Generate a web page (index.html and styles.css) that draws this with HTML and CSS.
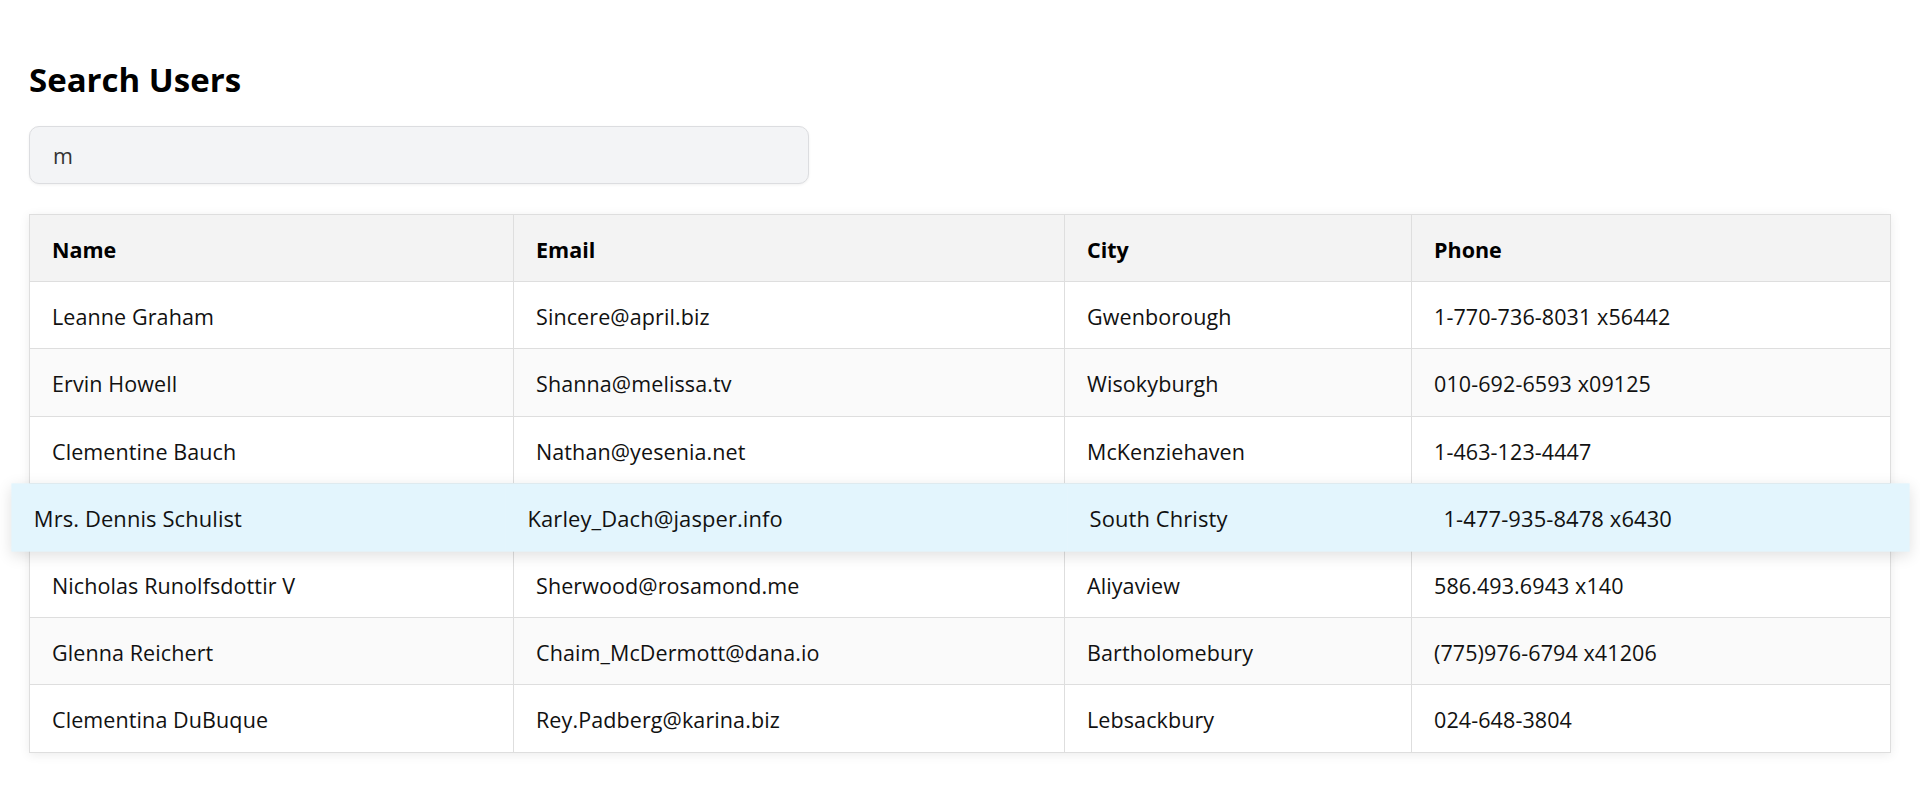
FILE: index.html
```html
<!DOCTYPE html>
<html lang="en">
<head>
<meta charset="utf-8">
<title>Search Users</title>
<link rel="stylesheet" href="styles.css">
</head>
<body>
<main class="page">
  <h1 class="title">Search Users</h1>
  <input class="search" type="text" value="m" aria-label="Search users">
  <table class="users">
    <thead>
      <tr>
        <th class="col-name">Name</th>
        <th class="col-email">Email</th>
        <th class="col-city">City</th>
        <th class="col-phone">Phone</th>
      </tr>
    </thead>
    <tbody>
      <tr><td>Leanne Graham</td><td>Sincere@april.biz</td><td>Gwenborough</td><td>1-770-736-8031 x56442</td></tr>
      <tr><td>Ervin Howell</td><td>Shanna@melissa.tv</td><td>Wisokyburgh</td><td>010-692-6593 x09125</td></tr>
      <tr><td>Clementine Bauch</td><td>Nathan@yesenia.net</td><td>McKenziehaven</td><td>1-463-123-4447</td></tr>
      <tr class="is-hover"><td>Mrs. Dennis Schulist</td><td>Karley_Dach@jasper.info</td><td>South Christy</td><td>1-477-935-8478 x6430</td></tr>
      <tr><td>Nicholas Runolfsdottir V</td><td>Sherwood@rosamond.me</td><td>Aliyaview</td><td>586.493.6943 x140</td></tr>
      <tr><td>Glenna Reichert</td><td>Chaim_McDermott@dana.io</td><td>Bartholomebury</td><td>(775)976-6794 x41206</td></tr>
      <tr><td>Clementina DuBuque</td><td>Rey.Padberg@karina.biz</td><td>Lebsackbury</td><td>024-648-3804</td></tr>
    </tbody>
  </table>
</main>
</body>
</html>
```
FILE: styles.css
```css
* { box-sizing: border-box; }

html, body {
  margin: 0;
  padding: 0;
  background: #ffffff;
}

body {
  font-family: "Open Sans", "Noto Sans", sans-serif;
  color: #111111;
}

.page {
  padding: 59px 29px 40px;
  display: flex;
  flex-direction: column;
  align-items: flex-start;
}

.title {
  margin: 0 0 25px;
  font-size: 33px;
  line-height: 42px;
  font-weight: 700;
  color: #000000;
}

.search {
  width: 780px;
  height: 58px;
  padding: 0 23px;
  border: 1px solid #dcdde0;
  border-radius: 10px;
  background: #f3f4f6;
  font-family: inherit;
  font-size: 21.5px;
  color: #333333;
  box-shadow: 0 1px 3px rgba(0, 0, 0, 0.06);
  outline: none;
  margin: 0 0 30px;
}

.users {
  width: 100%;
  table-layout: fixed;
  border-collapse: separate;
  border-spacing: 0;
  border: 1px solid #dedede;
  border-right: 0;
  border-bottom: 0;
  background: #ffffff;
  box-shadow: 0 2px 10px rgba(0, 0, 0, 0.08);
  font-size: 21.5px;
}

.col-name { width: 484px; }
.col-email { width: 551px; }
.col-city { width: 347px; }

.users th,
.users td {
  padding: 21px 22px 18.2px;
  line-height: 27px;
  text-align: left;
  border-right: 1px solid #dedede;
  border-bottom: 1px solid #dedede;
  white-space: nowrap;
}

.users th {
  background: #f3f3f3;
  font-weight: 700;
  color: #000000;
}

.users td {
  font-weight: 400;
  letter-spacing: 0.1px;
}

.users tbody tr:nth-child(even) {
  background: #fafafa;
}

.users tbody tr.is-hover {
  background: #e3f5fd;
  transform: scale(1.02);
  box-shadow: 0 4px 14px rgba(0, 0, 0, 0.12);
  position: relative;
  z-index: 1;
}

.users tbody tr.is-hover td {
  border-color: transparent;
}
```
